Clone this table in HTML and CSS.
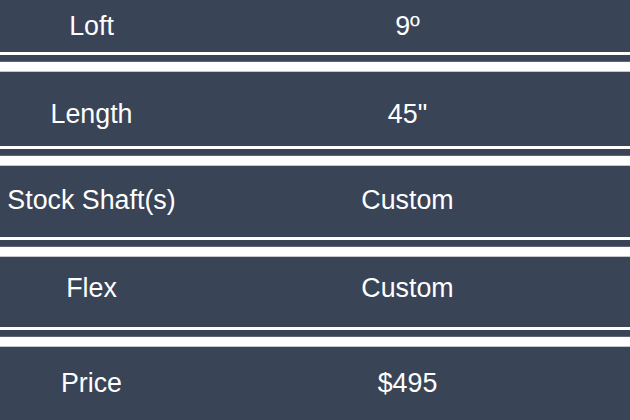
FILE: index.html
```html
<!DOCTYPE html>
<html>
<head>
<meta charset="utf-8">
<link rel="stylesheet" href="styles.css">
</head>
<body>
<div class="specs">
  <div class="row r1"><div class="label">Loft</div><div class="value">9º</div></div>
  <div class="sep"></div>
  <div class="row r2"><div class="label">Length</div><div class="value">45"</div></div>
  <div class="sep"></div>
  <div class="row r3"><div class="label">Stock Shaft(s)</div><div class="value">Custom</div></div>
  <div class="sep"></div>
  <div class="row r4"><div class="label">Flex</div><div class="value">Custom</div></div>
  <div class="sep"></div>
  <div class="row r5"><div class="label">Price</div><div class="value">$495</div></div>
</div>
</body>
</html>
```

FILE: styles.css
```css
html, body {
  margin: 0;
  padding: 0;
  background: #ffffff;
}
.specs {
  width: 630px;
  height: 420px;
  overflow: hidden;
  font-family: "Liberation Sans", Arial, sans-serif;
  font-size: 26.8px;
  color: #ffffff;
}
.row {
  display: flex;
  align-items: center;
  box-sizing: border-box;
  background: #394457;
}
.label {
  width: 183px;
  text-align: center;
  white-space: nowrap;
}
.value {
  flex: 1;
  padding-left: 2px;
  text-align: center;
  white-space: nowrap;
}
.r1 { height: 52px; }
.r2 { height: 74px; padding-top: 11px; }
.r3 { height: 71px; padding-bottom: 2px; }
.r4 { height: 70px; padding-bottom: 7px; }
.r5 { height: 73px; }
.sep {
  height: 20px;
  box-sizing: border-box;
  background: linear-gradient(to bottom,
    #ffffff 0, #ffffff 3px,
    #394457 3px, #394457 9px,
    #5d6672 9px, #5d6672 10px,
    #ffffff 10px, #ffffff 19px,
    #c4c8cd 19px, #c4c8cd 20px);
}
```
